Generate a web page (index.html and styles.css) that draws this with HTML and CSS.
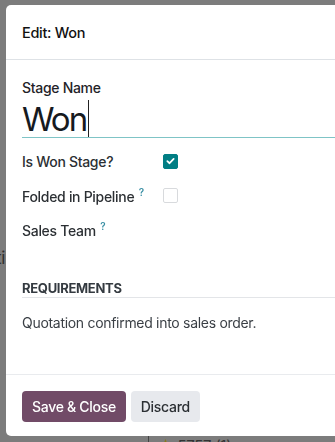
FILE: index.html
```html
<!DOCTYPE html>
<html lang="en">
<head>
  <meta charset="UTF-8" />
  <meta name="viewport" content="width=device-width, initial-scale=1.0"/>
  <title>Edit: Won</title>
  <link rel="stylesheet" href="styles.css">
</head>
<body>

<div class="page">
  <div class="page-line">ti</div>
  <div class="page-rating"><span class="bar"></span><span class="star">★</span> 5757 (1)</div>
</div>

<div class="modal">
  <header class="modal-header">Edit: Won</header>

  <div class="modal-body">
    <label class="field-title" for="stageName">Stage Name</label>
    <div class="name-input">
      <span id="stageName">Won</span><span class="caret"></span>
    </div>

    <div class="field-row first">
      <span class="field-label">Is Won Stage?</span>
      <span class="checkbox checked">
        <svg viewBox="0 0 14 14" width="14" height="14"><path d="M3.6 7.2 L6 9.4 L10.4 4.8" fill="none" stroke="#fff" stroke-width="1.9" stroke-linecap="round" stroke-linejoin="round"/></svg>
      </span>
    </div>
    <div class="field-row">
      <span class="field-label">Folded in Pipeline <sup class="help">?</sup></span>
      <span class="checkbox"></span>
    </div>
    <div class="field-row">
      <span class="field-label">Sales Team <sup class="help">?</sup></span>
    </div>

    <div class="section-title">REQUIREMENTS</div>
    <div class="section-text">Quotation confirmed into sales order.</div>
  </div>

  <footer class="modal-footer">
    <button class="btn btn-primary">Save &amp; Close</button>
    <button class="btn btn-secondary">Discard</button>
  </footer>
</div>

</body>
</html>
```

FILE: styles.css
```css
body {
  margin: 0;
  padding: 0;
  background: #7c7c7c;
  font-family: Inter, "Noto Sans", sans-serif;
  color: #1f2328;
  height: 442px;
  overflow: hidden;
  letter-spacing: -0.3px;
}

.page {
  height: 442px;
  display: flex;
  flex-direction: column;
  color: #2e2e2e;
}

.page-line {
  margin-top: 248px;
  margin-left: -4px;
  font-size: 17px;
}

.page-rating {
  margin-top: auto;
  margin-bottom: -13px;
  margin-left: 148px;
  font-size: 15px;
  display: flex;
  align-items: center;
  gap: 4px;
  color: #333;
}

.page-rating .bar {
  width: 1px;
  height: 20px;
  background: #444;
  margin-right: 5px;
}

.page-rating .star {
  color: #8a7a1a;
}

.modal {
  position: fixed;
  top: 5px;
  left: 6px;
  width: 360px;
  height: 431px;
  background: #fff;
  border-radius: 5px;
  display: flex;
  flex-direction: column;
}

.modal-header {
  height: 55px;
  box-sizing: border-box;
  padding: 0 16px;
  display: flex;
  align-items: center;
  font-size: 14.5px;
  font-weight: 500;
  color: #111;
  border-bottom: 1px solid #dee2e6;
}

.modal-body {
  flex: 1;
  padding: 18px 0 0 16px;
  font-size: 14px;
}

.field-title {
  display: block;
  font-weight: 500;
  line-height: 20px;
  color: #1f2328;
}

.name-input {
  height: 37px;
  margin-top: 2px;
  border-bottom: 1px solid #7fc4c6;
  display: flex;
  align-items: center;
  font-size: 33px;
  font-weight: 400;
  letter-spacing: -2px;
  color: #161a1f;
}

.caret {
  width: 1px;
  height: 37px;
  background: #222;
  margin-left: 2px;
}

.field-row {
  display: flex;
  align-items: center;
  height: 34px;
}

.field-row.first {
  margin-top: 6px;
}

.field-label {
  width: 141px;
  font-weight: 500;
  color: #2b2f33;
}

.help {
  color: #3a8fa4;
  font-size: 10px;
  font-weight: 600;
  vertical-align: 6px;
  margin-left: 1px;
}

.checkbox {
  width: 13px;
  height: 13px;
  border: 1px solid #d8dadd;
  border-radius: 2px;
  display: flex;
  align-items: center;
  justify-content: center;
}

.checkbox.checked {
  background: #017e84;
  border-color: #017e84;
}

.section-title {
  margin-top: 34px;
  line-height: 16px;
  padding-bottom: 1px;
  border-bottom: 1px solid #e3e5e8;
  font-weight: 700;
  font-size: 13px;
  color: #343a40;
}

.section-text {
  margin-top: 15px;
  line-height: 20px;
  color: #3a3f45;
}

.modal-footer {
  border-top: 1px solid #e9ebee;
  padding: 16px 16px 14px;
  display: flex;
  gap: 5px;
}

.btn {
  height: 31px;
  padding: 0 10px;
  border: none;
  border-radius: 4px;
  font-family: inherit;
  font-size: 14px;
  font-weight: 500;
  letter-spacing: -0.3px;
}

.btn-primary {
  background: #714b67;
  color: #fff;
}

.btn-secondary {
  background: #e7e9ed;
  color: #2b2f33;
}
```
